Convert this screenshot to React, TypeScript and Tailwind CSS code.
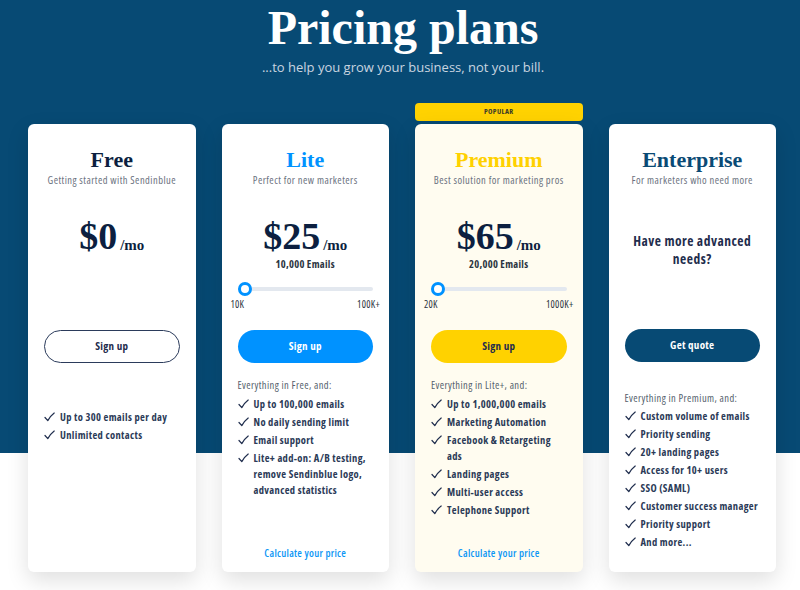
import React from 'react';

const serif = "font-['Liberation_Serif','DejaVu_Serif',serif]";
const sans = "font-['Open_Sans','Noto_Sans',sans-serif] [font-stretch:condensed]";

const Check = () => (
  <svg width="11" height="10" viewBox="0 0 11 10" className="shrink-0 mt-[3px]">
    <path d="M1 5.5 L3.8 8.6 Q6.5 3.8 10.2 1" fill="none" stroke="#1f2d4d" strokeWidth="1.2" strokeLinecap="round" strokeLinejoin="round" />
  </svg>
);

interface Plan {
  name: string;
  nameColor: string;
  tagline: string;
  price?: string;
  emails?: string;
  range?: [string, string];
  button: string;
  buttonClass: string;
  intro?: string;
  introMt: string;
  listMt: string;
  features: string[];
  calc?: boolean;
  bg: string;
}

const plans: Plan[] = [
  {
    name: 'Free',
    nameColor: 'text-[#0c1f40]',
    tagline: 'Getting started with Sendinblue',
    price: '$0',
    button: 'Sign up',
    buttonClass: 'bg-white border border-[#2b3b5b] text-[#1f2d4d]',
    introMt: '',
    listMt: 'mt-[46px]',
    features: ['Up to 300 emails per day', 'Unlimited contacts'],
    bg: 'bg-white',
  },
  {
    name: 'Lite',
    nameColor: 'text-[#0092ff]',
    tagline: 'Perfect for new marketers',
    price: '$25',
    emails: '10,000 Emails',
    range: ['10K', '100K+'],
    button: 'Sign up',
    buttonClass: 'bg-[#0092ff] text-white',
    intro: 'Everything in Free, and:',
    introMt: 'mt-[14px]',
    listMt: 'mt-[3px]',
    features: [
      'Up to 100,000 emails',
      'No daily sending limit',
      'Email support',
      'Lite+ add-on: A/B testing, remove Sendinblue logo, advanced statistics',
    ],
    calc: true,
    bg: 'bg-white',
  },
  {
    name: 'Premium',
    nameColor: 'text-[#ffd100]',
    tagline: 'Best solution for marketing pros',
    price: '$65',
    emails: '20,000 Emails',
    range: ['20K', '1000K+'],
    button: 'Sign up',
    buttonClass: 'bg-[#ffd200] text-[#1f2d4d]',
    intro: 'Everything in Lite+, and:',
    introMt: 'mt-[14px]',
    listMt: 'mt-[3px]',
    features: [
      'Up to 1,000,000 emails',
      'Marketing Automation',
      'Facebook & Retargeting ads',
      'Landing pages',
      'Multi-user access',
      'Telephone Support',
    ],
    calc: true,
    bg: 'bg-[#fffcf0]',
  },
  {
    name: 'Enterprise',
    nameColor: 'text-[#0a4a75]',
    tagline: 'For marketers who need more',
    button: 'Get quote',
    buttonClass: 'bg-[#074a74] text-white',
    intro: 'Everything in Premium, and:',
    introMt: 'mt-[28px]',
    listMt: 'mt-[2px]',
    features: [
      'Custom volume of emails',
      'Priority sending',
      '20+ landing pages',
      'Access for 10+ users',
      'SSO (SAML)',
      'Customer success manager',
      'Priority support',
      'And more...',
    ],
    bg: 'bg-white',
  },
];

const PlanCard: React.FC<{ plan: Plan }> = ({ plan }) => (
  <div className={`${plan.bg} h-[448px] rounded-md shadow-[0_8px_22px_rgba(0,0,0,0.13)] flex flex-col px-4 pt-[23px] pb-[11px]`}>
    <h2 className={`${serif} ${plan.nameColor} text-center text-[22px] leading-[26px] font-bold`}>{plan.name}</h2>
    <p className={`${sans} text-center text-[10.5px] leading-[16px] tracking-[0.45px] text-[#6b7280] -mt-px`}>{plan.tagline}</p>

    <div className="h-[142px] flex flex-col">
      {plan.price ? (
        <>
          <div className="mt-[28px] flex items-end justify-center text-[#0c1f40]">
            <span className={`${serif} text-[38px] leading-[40px] font-bold`}>{plan.price}</span>
            <span className={`${serif} text-[15px] leading-[22px] font-bold ml-[3px]`}>/mo</span>
          </div>
          {plan.emails && (
            <p className={`${sans} text-center text-[10.5px] leading-[16px] tracking-[0.3px] font-bold text-[#2b3440]`}>{plan.emails}</p>
          )}
          {plan.range && (
            <>
              <div className="mt-[10px] relative h-[14px] flex items-center">
                <div className="w-full h-[4px] rounded-full bg-[#e3e8ef]" />
                <div className="absolute left-0 top-0 w-[14px] h-[14px] rounded-full bg-white border-[3px] border-[#0092ff]" />
              </div>
              <div className={`${sans} mt-[1px] -mx-[7px] flex justify-between text-[10px] leading-[14px] tracking-[0.3px] text-[#2b3440]`}>
                <span>{plan.range[0]}</span>
                <span>{plan.range[1]}</span>
              </div>
            </>
          )}
        </>
      ) : (
        <p className={`${sans} mt-[44px] text-center text-[13.5px] leading-[18px] tracking-[0.5px] font-bold text-[#1f2d4d] px-2`}>
          Have more advanced needs?
        </p>
      )}
    </div>

    <button className={`${sans} ${plan.buttonClass} h-[33px] rounded-full text-[11px] tracking-[0.3px] font-bold ${plan.price ? '' : '-mt-px'}`}>
      {plan.button}
    </button>

    {plan.intro && (
      <p className={`${sans} ${plan.introMt} text-[10.5px] leading-[16px] tracking-[0.4px] text-[#555f6d]`}>{plan.intro}</p>
    )}
    <ul className={`${plan.listMt} flex flex-col gap-[2px]`}>
      {plan.features.map((f) => (
        <li key={f} className="flex gap-[5px]">
          <Check />
          <span className={`${sans} text-[10.5px] leading-[16px] tracking-[0.35px] font-bold text-[#2b3a57]`}>{f}</span>
        </li>
      ))}
    </ul>

    {plan.calc && (
      <p className={`${sans} mt-auto text-center text-[10.5px] leading-[16px] tracking-[0.3px] font-semibold text-[#0b96f5]`}>
        Calculate your price
      </p>
    )}
  </div>
);

export default function App() {
  return (
    <div className="w-[800px] h-[590px] overflow-hidden bg-[linear-gradient(to_bottom,#074a74_453px,#ffffff_453px)]">
      <div className="h-[103px] flex flex-col items-center pl-[6px]">
        <h1 className={`${serif} text-white text-[48px] leading-[56px] font-bold`}>Pricing plans</h1>
        <p className="font-['Open_Sans','Noto_Sans',sans-serif] text-[#c9d5e0] text-[13px] leading-[20px] mt-[1px]">
          ...to help you grow your business, not your bill.
        </p>
      </div>
      <div className="pl-[28px] pr-[24px] grid grid-cols-4 gap-x-[26px]">
        <div />
        <div />
        <div className={`${sans} h-[18px] rounded-[4px] bg-[#ffd200] flex items-center justify-center text-[7.5px] font-bold text-[#3a3a2a] tracking-[0.4px]`}>
          POPULAR
        </div>
        <div />
        <div className="col-span-4 h-[3px]" />
        {plans.map((p) => (
          <PlanCard key={p.name} plan={p} />
        ))}
      </div>
    </div>
  );
}
